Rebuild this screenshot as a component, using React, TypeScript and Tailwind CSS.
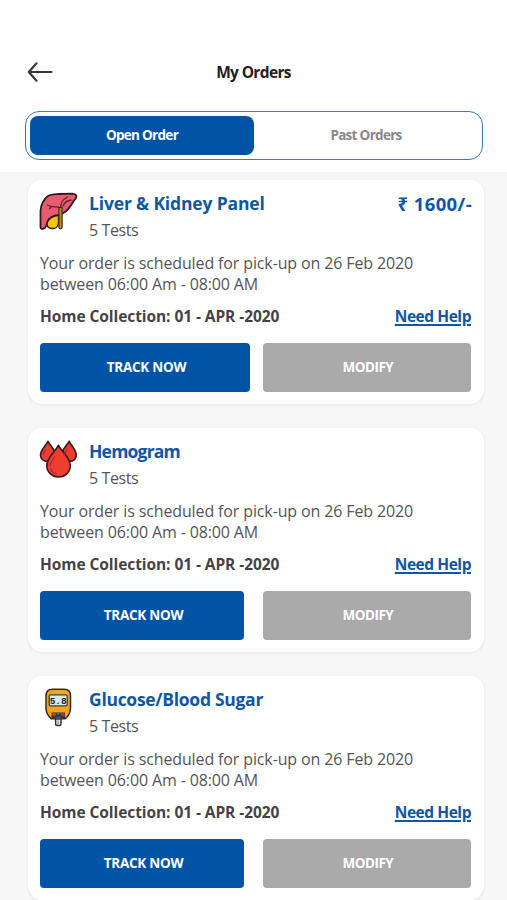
import type { ReactNode } from "react";

function LiverIcon() {
  return (
    <svg viewBox="0 0 40 40" className="h-10 w-10" strokeLinejoin="round" strokeLinecap="round">
      <path d="M8 32C8 28 9 25 12 24L19.5 22V31C19 35 16 36.8 13 36.5C10 36.3 8 35 8 32Z" fill="#f5c60c" stroke="#2c2418" strokeWidth="1.4" />
      <path d="M1.5 35V19C2 12 5 7 9 4C12 2 16 2.2 20 2L33 1.6C37.5 2 38.5 4.5 36.5 7C33.5 9 33.5 12 31 14.5C29 18 26 21 20 23C14 23.5 10 26 8.3 30C7.5 34 6.5 36 4.5 36.7C2.5 37.3 1.5 36.5 1.5 35Z" fill="#ea5b6d" stroke="#2b1c25" strokeWidth="1.8" />
      <path d="M8.5 13C13 15.5 17 14.5 21 15.8M12.5 14.7L10.5 16.5M28.5 5C24 7.5 21.5 10 21.5 16M32 8C28.5 8.5 25.5 10.5 24 14" fill="none" stroke="#54253a" strokeWidth="1.3" />
      <path d="M19.9 15.5H23.1V35C23.1 37.4 19.9 37.4 19.9 35Z" fill="#b98a25" stroke="#3a2b18" strokeWidth="1.2" />
    </svg>
  );
}

function BloodIcon() {
  return (
    <svg viewBox="0 0 40 40" className="h-10 w-10" fill="#f03d32" stroke="#35191c" strokeWidth="1.6" strokeLinejoin="round" strokeLinecap="round">
      <path d="M9 1.3C6.5 6 1.5 10 1.5 15C1.5 19 4.5 21.5 9 21.5C14 21.5 16.5 19 16.5 15C16.5 10 11.5 6 9 1.3Z" />
      <path d="M30.2 1.3C27.5 6 22.5 10 22.5 15C22.5 19 25.5 21.5 30.2 21.5C34.5 21.5 37.2 19 37.2 15C37.2 10 32.5 6 30.2 1.3Z" />
      <path d="M19.4 5.3C16 12 7.8 17.5 7.8 25.5C7.8 32 13 37 19.4 37C26.5 37 31.3 32 31.3 25.5C31.3 17.5 23 12 19.4 5.3Z" />
      <path d="M4.2 15C4.2 12.5 6 11 7 9.5M25.3 15C25.3 12.5 27 11 28 9.5M11.3 25.5C11.3 22 14 19.5 15.5 17M11.8 28.5C13 32 15.5 33.5 17.5 33.8" fill="none" stroke="#a92428" strokeWidth="1.1" />
    </svg>
  );
}

function GlucoseIcon() {
  return (
    <svg viewBox="0 0 40 40" className="h-10 w-10">
      <path d="M16.6 28H22V36Q22 37.5 20.5 37.5H18.1Q16.6 37.5 16.6 36Z" fill="#e4e4e9" stroke="#2b2b31" strokeWidth="1.4" />
      <path d="M13.5 1.3H25Q31.5 1.3 31.5 8V20C31.5 25 29 28.5 26 30.8H12.5C9.5 28.5 7 25 7 20V8Q7 1.3 13.5 1.3Z" fill="#f5a51d" stroke="#35291c" strokeWidth="1.5" />
      <rect x="10.2" y="6.8" width="18" height="11" rx="1.3" fill="#dbe8ec" stroke="#3a3c40" strokeWidth="1.3" />
      <text x="19.2" y="15.7" textAnchor="middle" fontSize="9.5" fontWeight="700" fontFamily="Liberation Mono, monospace" fill="#22252a">5.8</text>
      <path d="M12.5 24.5H26V30.8H12.5Z" fill="#35383f" />
      <circle cx="15" cy="26.3" r="1.8" fill="#d13a35" />
      <circle cx="19.2" cy="25.6" r="1.3" fill="#277aa6" />
      <circle cx="23.6" cy="26.3" r="1.8" fill="#b0353a" />
      <path d="M17 28.5H21.5V31.5H17Z" fill="#4b4d55" />
      <path d="M19.2 32.5V36" stroke="#9a98a0" strokeWidth="1.4" />
    </svg>
  );
}

type Order = {
  title: string;
  titleClass: string;
  icon: ReactNode;
  price?: string;
  trackClass: string;
};

const orders: Order[] = [
  { title: "Liver & Kidney Panel", titleClass: "tracking-[-0.16px]", icon: <LiverIcon />, price: "₹ 1600/-", trackClass: "w-[210px]" },
  { title: "Hemogram", titleClass: "tracking-[-0.8px]", icon: <BloodIcon />, trackClass: "w-[204px]" },
  { title: "Glucose/Blood Sugar", titleClass: "tracking-[-0.29px]", icon: <GlucoseIcon />, trackClass: "w-[204px]" },
];

function OrderCard({ order }: { order: Order }) {
  return (
    <article className="h-[224px] shrink-0 rounded-[14px] bg-white px-3 pt-3 shadow-[0_1px_3px_rgba(0,0,0,0.08)]">
      <div className="flex h-[60px]">
        <div className="-ml-px w-[50px]">{order.icon}</div>
        <div className="flex-1 whitespace-nowrap">
          <h2 className={`text-[17.5px] leading-[22px] font-bold text-[#0f56a5] ${order.titleClass}`}>{order.title}</h2>
          <p className="mt-[5px] text-[16px] leading-[22px] tracking-[-0.4px] text-[#555]">5 Tests</p>
        </div>
        {order.price && <span className="pt-px text-[18.5px] leading-[22px] font-bold tracking-[0.4px] whitespace-nowrap text-[#0f56a5]">{order.price}</span>}
      </div>
      <p className="pt-px text-[16px] leading-[21px] tracking-[-0.13px] whitespace-nowrap text-[#555]">
        Your order is scheduled for pick-up on 26 Feb 2020
        <br />
        between 06:00 Am - 08:00 AM
      </p>
      <div className="mt-[10px] flex h-[22px] items-center justify-between pr-px text-[15.5px] leading-[22px] font-bold whitespace-nowrap">
        <span className="tracking-[-0.07px] text-[#444]">Home Collection: 01 - APR -2020</span>
        <a className="text-[15.5px] tracking-[-0.45px] text-[#0f56a5] underline decoration-[1.5px] underline-offset-[2px]">Need Help</a>
      </div>
      <div className="mt-4 flex justify-between pr-[0.8px] text-[13.5px] font-bold text-white">
        <button className={`h-[48.5px] rounded-[4px] bg-[#0053a5] pl-[3px] tracking-[-0.25px] ${order.trackClass}`}>TRACK NOW</button>
        <button className="h-[48.5px] w-[208.7px] rounded-[4px] bg-[#aaa] pl-[2px] tracking-[-0.5px]">MODIFY</button>
      </div>
    </article>
  );
}

export default function App() {
  return (
    <div className="flex h-[900px] w-full flex-col overflow-hidden bg-[#f7f7f7] font-['Open_Sans','Noto_Sans',sans-serif]">
      <header className="h-[172px] shrink-0 bg-[#fefefe] pt-[60px]">
        <div className="flex h-6 items-center pl-[27px]">
          <svg viewBox="0 0 26 20" className="h-5 w-[26px]" fill="none" stroke="#38383b" strokeWidth="2.2" strokeLinecap="round" strokeLinejoin="round">
            <path d="M24.5 10H1.8M9.5 1.3L1.8 10L9.5 18.7" />
          </svg>
          <h1 className="-ml-[53px] flex-1 text-center text-[15.5px] leading-6 font-bold tracking-[-0.65px] text-[#222]">My Orders</h1>
        </div>
        <div className="mt-[27px] mr-[24px] ml-[25px] flex h-[49px] rounded-[14px] border-[1.5px] border-[#3a79bc] p-[4px] text-[13.5px] font-bold">
          <button className="w-[224px] rounded-[8px] bg-[#0053a5] tracking-[-0.7px] text-white">Open Order</button>
          <button className="flex-1 tracking-[-0.7px] text-[#888]">Past Orders</button>
        </div>
      </header>
      <main className="flex flex-col gap-6 pt-2 pr-[23px] pl-[28px]">
        {orders.map((order) => (
          <OrderCard key={order.title} order={order} />
        ))}
      </main>
    </div>
  );
}
